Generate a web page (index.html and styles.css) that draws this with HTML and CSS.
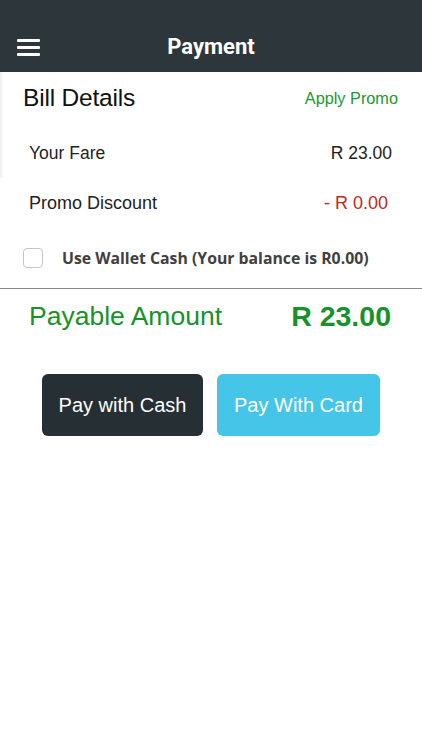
FILE: index.html
```html
<!DOCTYPE html>
<html>
<head>
<meta charset="utf-8">
<link rel="stylesheet" href="styles.css">
</head>
<body>
<header class="topbar">
  <div class="menu"><span></span><span></span><span></span></div>
  <h1 class="title">Payment</h1>
</header>
<main class="content">
  <div class="shade">
    <div class="bill-head">
      <h2>Bill Details</h2>
      <a class="promo">Apply Promo</a>
    </div>
    <div class="row fare"><span>Your Fare</span><span>R 23.00</span></div>
  </div>
  <div class="row discount"><span>Promo Discount</span><span class="red">- R 0.00</span></div>
  <label class="wallet"><span class="box"></span><span>Use Wallet Cash (Your balance is R0.00)</span></label>
  <div class="payable"><span>Payable Amount</span><span class="amt">R 23.00</span></div>
  <div class="buttons">
    <button class="btn cash">Pay with Cash</button>
    <button class="btn card">Pay With Card</button>
  </div>
</main>
</body>
</html>
```
FILE: styles.css
```css
html, body { margin: 0; padding: 0; background: #fff; }
body { font-family: "Helvetica Neue", "Liberation Sans", Arial, sans-serif; color: #111; width: 422px; }
.topbar {
  height: 72px; background: #2d373b; position: relative;
  display: flex; align-items: flex-end; justify-content: center;
  box-sizing: border-box; padding-bottom: 13px;
}
.menu { position: absolute; left: 17px; top: 39px; width: 23px; display: flex; flex-direction: column; gap: 4px; }
.menu span { display: block; height: 3px; background: #fff; border-radius: 1px; }
.title { margin: 0; color: #fff; font-family: Roboto, "Liberation Sans", sans-serif; font-weight: 700; font-size: 22px; line-height: 24px; }
.shade { background: linear-gradient(to right, #eeeeee 0, #fff 4px); }
.bill-head { display: flex; justify-content: space-between; align-items: center; padding: 13px 24px 0 23px; height: 26px; }
.bill-head h2 { margin: 0; font-weight: 400; font-size: 24.5px; color: #111; letter-spacing: -0.2px; }
.promo { color: #22962f; font-size: 16.3px; }
.row { display: flex; justify-content: space-between; align-items: center; padding: 0 30px 0 29px; height: 50px; font-size: 17.5px; color: #222; }
.fare { margin-top: 17px; }
.discount { padding-right: 34px; font-size: 18px; }
.red { color: #c0291e; }
.wallet { display: flex; align-items: center; gap: 19px; padding: 0 23px; height: 60px; font-family: "Open Sans", "Liberation Sans", sans-serif; font-weight: 700; font-size: 15.8px; color: #404040; }
.box { width: 18px; height: 18px; border: 1.5px solid #c4c4c4; border-radius: 4px; box-sizing: content-box; }
.payable { border-top: 1px solid #8a8a8a; display: flex; justify-content: space-between; align-items: center; padding: 0 31px 0 29px; height: 54px; color: #17922a; font-size: 26.5px; }
.payable .amt { font-weight: 700; font-size: 28.5px; }
.buttons { display: flex; justify-content: center; gap: 14px; margin-top: 31px; }
.btn { border: none; border-radius: 6px; height: 62px; color: #fff; font-family: "Helvetica Neue", "Liberation Sans", sans-serif; font-size: 20px; font-weight: 400; }
.cash { width: 161px; background: #252f34; }
.card { width: 163px; background: #45c6e8; }
```
